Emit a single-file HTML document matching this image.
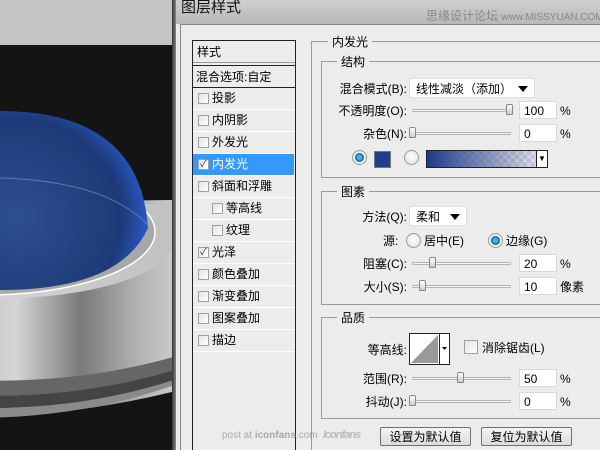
<!DOCTYPE html>
<html><head><meta charset="utf-8"><style>
*{margin:0;padding:0;box-sizing:border-box}
html,body{width:600px;height:450px;overflow:hidden}
body{position:relative;background:#ececec;font-family:"Liberation Sans","Noto Sans CJK SC",sans-serif;font-size:12px;color:#000;line-height:14px}
.a{position:absolute;white-space:nowrap}
.grp{position:absolute;border:1px solid #9a9a9a}
.lg{position:absolute;background:#ececec;padding:0 4px;font-size:12px}
.lbl{position:absolute;text-align:right;width:120px;font-size:12px}
.inp{position:absolute;background:#fff;border:1px solid #d8d8d8;height:18px;font-size:12px;padding:2px 0 0 4px}
.trk{position:absolute;height:3px;border:1px solid #b4b4b4;border-radius:2px;background:#f6f6f6}
.thumb{position:absolute;width:7px;height:11px;border:1px solid #888;border-radius:2px 2px 1px 1px;background:linear-gradient(#fff,#ccc)}
.dd{position:absolute;background:#fff;border:1px solid #ddd;height:20px;font-size:12px;padding:3px 0 0 6px}
.dd:after{content:"";position:absolute;right:6px;top:7px;border-left:5px solid transparent;border-right:5px solid transparent;border-top:6px solid #000}
.row{position:absolute;left:193px;width:101px;height:22px;border-bottom:1px solid #fff;font-size:12px;padding:3px 0 0 19px}
.cb{position:absolute;width:11px;height:11px;border:1px solid #a0a0a0;background:linear-gradient(135deg,#e4e4e4,#fff)}
.rad{position:absolute;width:15px;height:15px;border-radius:50%;border:1px solid #999;background:radial-gradient(circle at 50% 40%,#fff,#ddd)}
.rad.on{background:radial-gradient(circle,#5ad 0 2px,#06a 4px,#fff 5px,#ddd 7px)}
.btn{position:absolute;height:19px;border:1px solid #707070;border-radius:2px;background:linear-gradient(#f4f4f4,#dcdcdc);text-align:center;font-size:12px;padding-top:2px}
</style></head><body>
<svg class="a" style="left:0;top:0" width="174" height="450">
<defs>
<linearGradient id="body" x1="0" x2="1"><stop offset="0" stop-color="#b8b8b8"/><stop offset=".25" stop-color="#d6d6d6"/><stop offset=".55" stop-color="#7a7a7a"/><stop offset=".8" stop-color="#b0b0b0"/><stop offset="1" stop-color="#cfcfcf"/></linearGradient>
<radialGradient id="dome" cx=".3" cy=".6" r=".8"><stop offset="0" stop-color="#2e4f8e"/><stop offset=".7" stop-color="#1d3a78"/><stop offset=".9" stop-color="#2c5cd0"/><stop offset="1" stop-color="#4a7ff0"/></radialGradient>
<linearGradient id="top" x1="0" x2="1"><stop offset="0" stop-color="#d8d8d8"/><stop offset="1" stop-color="#c0c0c0"/></linearGradient>
</defs>
<rect width="174" height="45" fill="#c4c4c4"/>
<rect y="45" width="174" height="405" fill="#141414"/>
<path d="M-40,250 Q-40,200 180,200 L180,390 Q60,420 -40,415 Z" fill="url(#body)"/>
<path d="M-40,250 Q-40,200 180,205 L180,235 Q160,300 -40,300Z" fill="url(#top)"/>
<path d="M-40,380 Q80,385 180,355 L180,368 Q80,400 -40,395Z" fill="#666"/>
<path d="M-40,395 Q80,400 180,368 L180,378 Q80,412 -40,408Z" fill="#444"/>
<path d="M-40,408 Q80,412 180,378 L180,383 Q80,420 -40,418Z" fill="#8a8a8a"/>
<ellipse cx="-15" cy="232" rx="170" ry="63" fill="#a8a8a8" stroke="#fff" stroke-width="1.5"/>
<path d="M-40,230 Q-40,111 0,111 Q140,111 148,228 Q120,290 0,290 L-40,290Z" fill="url(#dome)"/>
<path d="M-30,178 Q100,175 148,225" stroke="#7b8fb8" stroke-width="1" fill="none" opacity=".7"/>
</svg>
<div class="a" style="left:172px;top:0;width:4px;height:450px;background:linear-gradient(90deg,#333,#888)"></div>
<div class="a" style="left:176px;top:0;width:424px;height:24px;background:linear-gradient(#d0d0d0,#b8b8b8)"></div>
<div class="a" style="left:181px;top:-1px;font-size:15px;line-height:17px;color:#111">图层样式</div>
<div class="a" style="left:426px;top:9px;font-size:12px;color:#888">思缘设计论坛 <span style="font-size:10px">www.MISSYUAN.COM</span></div>
<div class="a" style="left:180px;top:24px;width:420px;height:426px;border-left:1px solid #888;border-top:1px solid #888;background:#ececec"></div>
<div class="a" style="left:192px;top:40px;width:104px;height:410px;border:1px solid #222;border-bottom:none;background:#ececec"></div>
<div class="a" style="left:197px;top:45px;font-size:12px">样式</div>
<div class="a" style="left:193px;top:62px;width:102px;height:4px;border-top:1px solid #999;border-bottom:1px solid #222"></div>
<div class="a" style="left:196px;top:70px;font-size:12px">混合选项:自定</div>
<div class="a" style="left:193px;top:87px;width:102px;height:1px;background:#222"></div>
<div class="row" style="top:88px">投影</div><div class="cb" style="left:198px;top:93px"></div>
<div class="row" style="top:110px">内阴影</div><div class="cb" style="left:198px;top:115px"></div>
<div class="row" style="top:132px">外发光</div><div class="cb" style="left:198px;top:137px"></div>
<div class="row" style="top:154px;background:#3399ff;color:#fff">内发光</div><div class="cb" style="left:198px;top:159px;font-size:10px;color:#335;line-height:9px;text-align:center">✓</div>
<div class="row" style="top:176px">斜面和浮雕</div><div class="cb" style="left:198px;top:181px"></div>
<div class="row" style="top:198px;padding-left:33px">等高线</div><div class="cb" style="left:212px;top:203px"></div>
<div class="row" style="top:220px;padding-left:33px">纹理</div><div class="cb" style="left:212px;top:225px"></div>
<div class="row" style="top:242px">光泽</div><div class="cb" style="left:198px;top:247px;font-size:10px;color:#335;line-height:9px;text-align:center">✓</div>
<div class="row" style="top:264px">颜色叠加</div><div class="cb" style="left:198px;top:269px"></div>
<div class="row" style="top:286px">渐变叠加</div><div class="cb" style="left:198px;top:291px"></div>
<div class="row" style="top:308px">图案叠加</div><div class="cb" style="left:198px;top:313px"></div>
<div class="row" style="top:330px">描边</div><div class="cb" style="left:198px;top:335px"></div>
<div class="a" style="left:222px;top:429px;font-size:10px;color:#aaa">post at <b>iconfans</b>.com</div>
<div class="a" style="left:323px;top:428px;font-size:11px;color:#bbb;font-style:italic;font-weight:bold;letter-spacing:-1px">Iconfans</div>
<div class="grp" style="left:311px;top:41px;width:300px;height:420px;border-right:none;border-bottom:none"></div>
<div class="lg" style="left:328px;top:35px">内发光</div>
<div class="grp" style="left:321px;top:61px;width:290px;height:117px;border-right:none"></div>
<div class="lg" style="left:337px;top:55px">结构</div>
<div class="lbl" style="left:287px;top:82px">混合模式(B):</div>
<div class="dd" style="left:409px;top:78px;width:126px">线性减淡（添加）</div>
<div class="lbl" style="left:287px;top:104px">不透明度(O):</div>
<div class="trk" style="left:412px;top:109px;width:99px"></div><div class="thumb" style="left:506px;top:104px"></div>
<div class="inp" style="left:519px;top:101px;width:38px">100</div><div class="a" style="left:560px;top:104px">%</div>
<div class="lbl" style="left:287px;top:127px">杂色(N):</div>
<div class="trk" style="left:412px;top:132px;width:99px"></div><div class="thumb" style="left:409px;top:127px"></div>
<div class="inp" style="left:519px;top:124px;width:38px">0</div><div class="a" style="left:560px;top:127px">%</div>
<div class="rad on" style="left:352px;top:150px"></div>
<div class="a" style="left:374px;top:151px;width:17px;height:17px;border:1px solid #777;background:#1f3f8a"></div>
<div class="rad" style="left:404px;top:150px"></div>
<div class="a" style="left:426px;top:150px;width:122px;height:18px;border:1px solid #222;background:linear-gradient(90deg,#1f3a88,rgba(200,200,210,.3)),repeating-conic-gradient(#ddd 0 25%,#fff 0 50%) 0 0/8px 8px"></div>
<div class="a" style="left:536px;top:151px;width:11px;height:16px;background:#fff;border-left:1px solid #222;font-size:8px;text-align:center;line-height:16px">▼</div>
<div class="grp" style="left:321px;top:191px;width:290px;height:114px;border-right:none"></div>
<div class="lg" style="left:337px;top:185px">图素</div>
<div class="lbl" style="left:287px;top:210px">方法(Q):</div>
<div class="dd" style="left:409px;top:206px;width:58px">柔和</div>
<div class="a" style="left:383px;top:234px">源:</div>
<div class="rad" style="left:406px;top:233px"></div><div class="a" style="left:424px;top:234px">居中(E)</div>
<div class="rad on" style="left:488px;top:233px"></div><div class="a" style="left:506px;top:234px">边缘(G)</div>
<div class="lbl" style="left:287px;top:257px">阻塞(C):</div>
<div class="trk" style="left:412px;top:262px;width:99px"></div><div class="thumb" style="left:429px;top:257px"></div>
<div class="inp" style="left:519px;top:254px;width:38px">20</div><div class="a" style="left:560px;top:257px">%</div>
<div class="lbl" style="left:287px;top:280px">大小(S):</div>
<div class="trk" style="left:412px;top:285px;width:99px"></div><div class="thumb" style="left:419px;top:280px"></div>
<div class="inp" style="left:519px;top:277px;width:38px">10</div><div class="a" style="left:560px;top:280px">像素</div>
<div class="grp" style="left:321px;top:317px;width:290px;height:102px;border-right:none"></div>
<div class="lg" style="left:337px;top:311px">品质</div>
<div class="lbl" style="left:287px;top:343px">等高线:</div>
<svg class="a" style="left:409px;top:333px" width="41" height="32"><rect x=".5" y=".5" width="40" height="31" fill="#fff" stroke="#222"/><path d="M2,30 L29,2 L29,30Z" fill="#999"/><line x1="30.5" y1="0" x2="30.5" y2="32" stroke="#222"/><path d="M33,14 L38,14 L35.5,17Z" fill="#000"/></svg>
<div class="cb" style="left:464px;top:340px;width:14px;height:14px"></div>
<div class="a" style="left:482px;top:341px">消除锯齿(L)</div>
<div class="lbl" style="left:287px;top:372px">范围(R):</div>
<div class="trk" style="left:412px;top:377px;width:99px"></div><div class="thumb" style="left:457px;top:372px"></div>
<div class="inp" style="left:519px;top:369px;width:38px">50</div><div class="a" style="left:560px;top:372px">%</div>
<div class="lbl" style="left:287px;top:395px">抖动(J):</div>
<div class="trk" style="left:412px;top:400px;width:99px"></div><div class="thumb" style="left:409px;top:395px"></div>
<div class="inp" style="left:519px;top:392px;width:38px">0</div><div class="a" style="left:560px;top:395px">%</div>
<div class="btn" style="left:380px;top:427px;width:91px">设置为默认值</div>
<div class="btn" style="left:481px;top:427px;width:91px">复位为默认值</div>
</body></html>
